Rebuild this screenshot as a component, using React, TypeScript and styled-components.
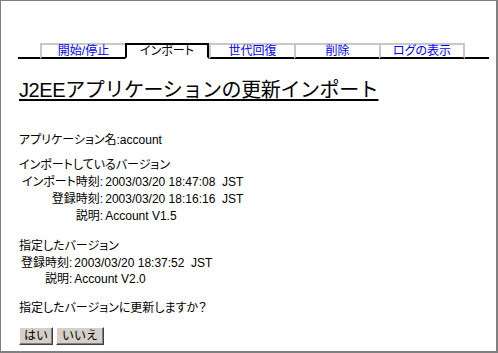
import { Fragment } from "react";
import styled, { createGlobalStyle } from "styled-components";

const GlobalStyle = createGlobalStyle`
  html, body {
    margin: 0;
    padding: 0;
    background: #ffffff;
  }
  body {
    font-family: "Liberation Sans", "Noto Sans CJK JP", sans-serif;
    font-size: 12px;
    color: #000000;
  }
`;

const Frame = styled.div`
  box-sizing: border-box;
  width: 498px;
  height: 353px;
  border-top: 1px solid #808080;
  border-left: 1px solid #808080;
  border-right: 2px solid #808080;
  border-bottom: 2px solid #808080;
  padding: 42px 7px 0 17px;
  font-feature-settings: "palt";
`;

const TabBar = styled.div`
  display: flex;
  align-items: flex-end;
  height: 16px;
`;

const TabSpacer = styled.div<{ $grow?: boolean }>`
  box-sizing: border-box;
  width: 22px;
  flex: ${(p) => (p.$grow ? 1 : "none")};
  height: 2px;
  background: #000000;
`;

const Tab = styled.a<{ $active?: boolean; $width: number; $last?: boolean }>`
  box-sizing: border-box;
  display: block;
  width: ${(p) => p.$width}px;
  height: 16px;
  line-height: 12px;
  font-size: 12px;
  text-align: center;
  text-decoration: none;
  white-space: nowrap;
  cursor: pointer;
  color: ${(p) => (p.$active ? "#000000" : "#0000ff")};
  border-top: 2px solid ${(p) => (p.$active ? "#000000" : "#c8c8c8")};
  border-left: 2px solid ${(p) => (p.$active ? "#000000" : "#c8c8c8")};
  border-right: ${(p) =>
    p.$active ? "2px solid #000000" : p.$last ? "2px solid #c8c8c8" : "none"};
  border-bottom: 2px solid ${(p) => (p.$active ? "#ffffff" : "#000000")};
  background: #ffffff;
`;

const Content = styled.div`
  padding-left: 1px;
`;

const Title = styled.h1`
  margin: 19px 0 0 0;
  font-size: 20px;
  line-height: 24px;
  font-weight: normal;
  letter-spacing: -0.4px;
  text-decoration: underline;
  text-underline-offset: 2px;
  font-feature-settings: normal;
  display: inline-block;
`;

const Line = styled.p<{ $top: number }>`
  margin: ${(p) => p.$top}px 0 0 0;
  line-height: 17px;
  white-space: nowrap;
`;

const InfoTable = styled.div<{ $indent: number; $row: number }>`
  display: grid;
  grid-template-columns: auto auto;
  justify-content: start;
  line-height: ${(p) => p.$row}px;
  margin-left: ${(p) => p.$indent}px;
`;

const Label = styled.span`
  text-align: right;
  white-space: nowrap;
`;

const Value = styled.span`
  padding-left: 2px;
  white-space: pre;
`;

const ButtonRow = styled.div`
  display: flex;
  gap: 3px;
  margin-top: 10px;
`;

const Button = styled.button<{ $width: number }>`
  box-sizing: border-box;
  width: ${(p) => p.$width}px;
  height: 18px;
  padding: 0;
  font-family: inherit;
  font-size: 12px;
  line-height: 14px;
  color: #000000;
  background: #d4d0c8;
  border-top: 1px solid #ffffff;
  border-left: 1px solid #ffffff;
  border-right: 1px solid #404040;
  border-bottom: 1px solid #404040;
  box-shadow: inset -1px -1px 0 #808080;
  cursor: pointer;
`;

const tabs = [
  { label: "開始/停止", width: 85 },
  { label: "インポート", width: 84, active: true },
  { label: "世代回復", width: 85 },
  { label: "削除", width: 85 },
  { label: "ログの表示", width: 86 },
];

const current = [
  { label: "インポート時刻:", value: "2003/03/20 18:47:08  JST" },
  { label: "登録時刻:", value: "2003/03/20 18:16:16  JST" },
  { label: "説明:", value: "Account V1.5" },
];

const target = [
  { label: "登録時刻:", value: "2003/03/20 18:37:52  JST" },
  { label: "説明:", value: "Account V2.0" },
];

export default function App() {
  return (
    <>
      <GlobalStyle />
      <Frame>
        <TabBar>
          <TabSpacer />
          {tabs.map((t, i) => (
            <Tab key={t.label} $active={t.active} $width={t.width} $last={i === tabs.length - 1}>
              {t.label}
            </Tab>
          ))}
          <TabSpacer $grow />
        </TabBar>
        <Content>
          <Title>J2EEアプリケーションの更新インポート</Title>
          <Line $top={30}>アプリケーション名:account</Line>
          <Line $top={8}>インポートしているバージョン</Line>
          <InfoTable $indent={3} $row={17}>
            {current.map((r) => (
              <Fragment key={r.label}>
                <Label>{r.label}</Label>
                <Value>{r.value}</Value>
              </Fragment>
            ))}
          </InfoTable>
          <Line $top={13}>指定したバージョン</Line>
          <InfoTable $indent={2} $row={16}>
            {target.map((r) => (
              <Fragment key={r.label}>
                <Label>{r.label}</Label>
                <Value>{r.value}</Value>
              </Fragment>
            ))}
          </InfoTable>
          <Line $top={13}>指定したバージョンに更新しますか？</Line>
          <ButtonRow>
            <Button $width={34}>はい</Button>
            <Button $width={48}>いいえ</Button>
          </ButtonRow>
        </Content>
      </Frame>
    </>
  );
}
